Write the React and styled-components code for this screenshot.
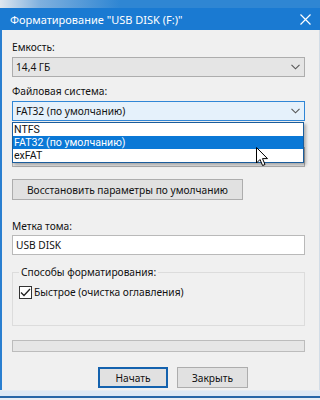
import React from "react";
import styled, { createGlobalStyle } from "styled-components";

const Global = createGlobalStyle`
  html, body { margin: 0; padding: 0; background: #f0f0f0; }
  body {
    width: 320px; height: 400px; overflow: hidden;
    font-family: "Noto Sans", "Liberation Sans", sans-serif;
    font-size: 10.2px; color: #111;
  }
`;

const Frame = styled.div`
  width: 320px; height: 400px;
  display: flex; flex-direction: column;
  box-sizing: border-box;
`;

const TopStrip = styled.div`
  height: 8px; flex: none;
  background: linear-gradient(90deg, #dfe7ef 0px, #7fb0de 40px, #2f86d3 120px, #2f86d3 100%);
`;

const TitleBar = styled.div`
  height: 22px; flex: none;
  display: flex; align-items: center; justify-content: space-between;
  background: #1a7ad2;
  padding: 0 9px 0 10px;
  color: #fff;
`;

const Title = styled.div`
  font-size: 11px; line-height: 15px; white-space: nowrap;
`;

const Body = styled.div`
  flex: 1;
  display: flex; flex-direction: column;
  background: #f0f0f0;
  border-left: 2px solid #2a7fd0;
  border-right: 1px solid #d3dde7;
  padding: 10px 14px 0 10px;
  position: relative;
`;

const Label = styled.div`
  line-height: 15px; height: 15px;
  margin-top: ${p => p.$mt || 0}px;
  white-space: nowrap;
`;

const Spacer = styled.div`
  height: ${p => p.$h}px;
  margin-top: ${p => p.$mt || 0}px;
`;

const ComboWrap = styled.div`
  position: relative;
  margin-top: ${p => p.$mt || 2}px;
`;

const Combo = styled.div`
  height: 20px; box-sizing: border-box;
  display: flex; align-items: center; justify-content: space-between;
  padding: 0 4px 0 3px;
  border: 1px solid ${p => (p.$active ? "#2f86d6" : "#adadad")};
  background: ${p => (p.$active ? "#e5f1fb" : "#e5e5e5")};
  line-height: 15px;
`;

const DropList = styled.div`
  position: absolute; left: 0; right: 1px; top: 21px;
  background: #fff;
  border: 1px solid #1b5d9c;
  box-shadow: 2px 2px 3px rgba(0,0,0,0.28);
  z-index: 2;
`;

const Item = styled.div`
  height: 13px; line-height: 13px;
  padding-left: 1px;
  font-family: Roboto, "Noto Sans", sans-serif;
  font-size: 10.6px;
  background: ${p => (p.$sel ? "#0a78d6" : "#fff")};
  color: ${p => (p.$sel ? "#fff" : "#111")};
  white-space: nowrap;
`;

const Button = styled.div`
  box-sizing: border-box;
  height: 21px;
  width: ${p => p.$w}px;
  display: flex; align-items: center; justify-content: center;
  background: #e1e1e1;
  border: ${p => (p.$default ? "2px solid #1462ae" : "1px solid #adadad")};
  white-space: nowrap;
  margin-top: ${p => p.$mt || 0}px;
`;

const Input = styled.div`
  height: 20px; box-sizing: border-box;
  margin-top: 1px;
  border: 1px solid #b9b9b9;
  background: #fff;
  padding-left: 3px;
  display: flex; align-items: center;
`;

const Group = styled.fieldset`
  margin: 10px 0 0 0;
  padding: 0 6px 26px 6px;
  border: 1px solid #dcdcdc;
  min-width: 0;
`;

const Legend = styled.legend`
  padding: 0 2px;
  line-height: 15px;
  font-size: 10.2px;
`;

const CheckRow = styled.div`
  display: flex; align-items: center; gap: 2px;
  margin-top: 6px;
  height: 13px;
  line-height: 15px;
`;

const Box = styled.div`
  width: 13px; height: 13px; box-sizing: border-box;
  border: 1px solid #333;
  background: #fff;
  display: flex; align-items: center; justify-content: center;
`;

const Progress = styled.div`
  height: 12px; box-sizing: border-box;
  margin-top: 14px;
  border: 1px solid #bcbcbc;
  background: #e6e6e6;
`;

const Buttons = styled.div`
  display: flex; gap: 9px;
  margin-top: 15px;
  padding-left: 86px;
`;

const BottomStrip = styled.div`
  flex: none;
  height: 10px;
  background: linear-gradient(#f0f0f0 0, #dde9f5 1px, #dde9f5 6px, #2767a8 6px, #2767a8 8px, #e9eef3 8px);
`;

const Cursor = styled.svg`
  position: absolute;
  left: 254px; top: 117px;
  z-index: 3;
`;

const Chevron = () => (
  <svg width="9" height="6" viewBox="0 0 9 6">
    <path d="M0.5 0.8 L4.5 4.8 L8.5 0.8" fill="none" stroke="#555" strokeWidth="1.1" />
  </svg>
);

export default function App() {
  return (
    <>
      <Global />
      <Frame>
        <TopStrip />
        <TitleBar>
          <Title>Форматирование "USB DISK (F:)"</Title>
          <svg width="11" height="11" viewBox="0 0 11 11">
            <path d="M0.5 0.5 L10.5 10.5 M10.5 0.5 L0.5 10.5" stroke="#fff" strokeWidth="1.2" />
          </svg>
        </TitleBar>
        <Body>
          <Label>Емкость:</Label>
          <ComboWrap>
            <Combo>
              <span>14,4 ГБ</span>
              <Chevron />
            </Combo>
          </ComboWrap>
          <Label $mt={7}>Файловая система:</Label>
          <ComboWrap>
            <Combo $active>
              <span>FAT32 (по умолчанию)</span>
              <Chevron />
            </Combo>
            <DropList>
              <Item>NTFS</Item>
              <Item $sel>FAT32 (по умолчанию)</Item>
              <Item>exFAT</Item>
            </DropList>
          </ComboWrap>
          <Spacer $h={15} $mt={9} />
          <ComboWrap>
            <Combo>
              <span />
              <Chevron />
            </Combo>
          </ComboWrap>
          <Button $w={231} $mt={12}>Восстановить параметры по умолчанию</Button>
          <Label $mt={19}>Метка тома:</Label>
          <Input>USB DISK</Input>
          <Group>
            <Legend>Способы форматирования:</Legend>
            <CheckRow>
              <Box>
                <svg width="11" height="9" viewBox="0 0 11 9">
                  <path d="M1 4.5 L4 7.5 L10 1" fill="none" stroke="#222" strokeWidth="1.3" />
                </svg>
              </Box>
              <span>Быстрое (очистка оглавления)</span>
            </CheckRow>
          </Group>
          <Progress />
          <Buttons>
            <Button $w={70} $default>Начать</Button>
            <Button $w={71}>Закрыть</Button>
          </Buttons>
          <Cursor width="13" height="20" viewBox="0 0 13 20">
            <path d="M0.5 0.5 L0.5 16 L4 12.5 L6.6 18.5 L9 17.5 L6.5 11.6 L11.5 11.6 Z" fill="#fff" stroke="#000" strokeWidth="1" strokeLinejoin="round" />
          </Cursor>
        </Body>
        <BottomStrip />
      </Frame>
    </>
  );
}
